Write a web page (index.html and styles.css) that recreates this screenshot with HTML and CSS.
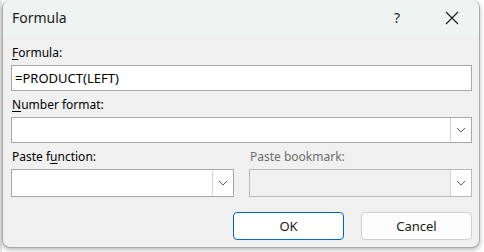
FILE: index.html
```html
<!DOCTYPE html>
<html>
<head>
<meta charset="utf-8">
<link rel="stylesheet" href="styles.css">
</head>
<body>
<div class="backdrop">
  <div class="window">
    <div class="titlebar">
      <span class="title">Formula</span>
      <span class="help">?</span>
      <span class="close"><svg width="14" height="14" viewBox="0 0 14 14"><path d="M1 1L13 13M13 1L1 13" stroke="#1a1a1a" stroke-width="1.1" fill="none"/></svg></span>
    </div>
    <div class="content">
      <label class="lbl lbl-first"><u>F</u>ormula:</label>
      <div class="textbox">=PRODUCT(LEFT)</div>
      <label class="lbl"><u>N</u>umber format:</label>
      <div class="combo combo-short"><span class="combo-btn"><svg width="10" height="6" viewBox="0 0 10 6"><path d="M1 1L5 5L9 1" stroke="#5f5f5f" stroke-width="1" fill="none"/></svg></span></div>
      <div class="row">
        <div class="col">
          <label class="lbl">Paste f<u>u</u>nction:</label>
          <div class="combo"><span class="combo-btn"><svg width="10" height="6" viewBox="0 0 10 6"><path d="M1 1L5 5L9 1" stroke="#5f5f5f" stroke-width="1" fill="none"/></svg></span></div>
        </div>
        <div class="col">
          <label class="lbl lbl-disabled">Paste bookmark:</label>
          <div class="combo combo-disabled"><span class="combo-btn"><svg width="10" height="6" viewBox="0 0 10 6"><path d="M1 1L5 5L9 1" stroke="#5f5f5f" stroke-width="1" fill="none"/></svg></span></div>
        </div>
      </div>
      <div class="buttons">
        <button class="btn btn-default">OK</button>
        <button class="btn">Cancel</button>
      </div>
    </div>
  </div>
</div>
</body>
</html>
```
FILE: styles.css
```css
html, body {
  margin: 0;
  padding: 0;
}
body {
  width: 484px;
  height: 252px;
  overflow: hidden;
  background: #ffffff;
  font-family: "Noto Sans", "Open Sans", sans-serif;
}
.backdrop {
  height: 252px;
  padding-left: 2px;
  background: linear-gradient(to right, #e4e4e4 0, #e4e4e4 2px, #ffffff 2px);
}
.window {
  width: 476px;
  height: 247px;
  border: 1px solid #a9a9a9;
  border-top: none;
  border-radius: 8px;
  background: #f0f0f0;
  box-shadow: 0 2px 5px rgba(0,0,0,0.28);
  overflow: hidden;
  display: flex;
  flex-direction: column;
}
.titlebar {
  height: 35px;
  flex: none;
  background: #edf4f2;
  display: flex;
  align-items: center;
}
.title {
  font-size: 14px;
  color: #1c1c1c;
  padding-left: 9px;
  flex: 1;
  margin-top: -1px;
}
.help {
  font-size: 14px;
  color: #1c1c1c;
  width: 14px;
  text-align: center;
  margin-right: 41px;
}
.close {
  display: flex;
  width: 14px;
  height: 14px;
  margin-right: 20px;
}
.content {
  padding: 0 7px 0 8px;
  display: flex;
  flex-direction: column;
}
.lbl {
  display: block;
  font-size: 12px;
  line-height: 16px;
  height: 16px;
  color: #000;
  padding-left: 1px;
  margin-top: 6px;
  margin-bottom: 4px;
}
.lbl-first {
  margin-top: 10px;
}
.lbl u {
  text-decoration-thickness: 1px;
  text-underline-offset: 2px;
}
.lbl-disabled {
  color: #6d6d6d;
}
.textbox {
  height: 24px;
  border: 1px solid #a8a8a8;
  background: #fff;
  font-size: 13px;
  line-height: 24px;
  padding-left: 3px;
  color: #000;
}
.combo {
  height: 26px;
  border: 1px solid #a8a8a8;
  background: #fff;
  display: flex;
  justify-content: flex-end;
}
.combo-short {
  height: 24px;
}
.combo-disabled {
  background: #f0f0f0;
  border-color: #b9b9b9;
}
.combo-btn {
  width: 20px;
  background: #fff;
  border-left: 1px solid #d4d4d4;
  display: flex;
  align-items: center;
  justify-content: center;
}
.row {
  display: flex;
  gap: 15px;
}
.col {
  flex: 1;
}
.buttons {
  display: flex;
  justify-content: flex-end;
  gap: 17px;
  margin-top: 15px;
}
.btn {
  width: 111px;
  height: 28px;
  border-radius: 4px;
  border: 1px solid #d0d0d0;
  background: #fdfdfd;
  font-family: "Noto Sans", "Open Sans", sans-serif;
  font-size: 13px;
  color: #1a1a1a;
  padding: 0;
}
.btn-default {
  border-color: #0067c0;
  background: #ffffff;
}
```
